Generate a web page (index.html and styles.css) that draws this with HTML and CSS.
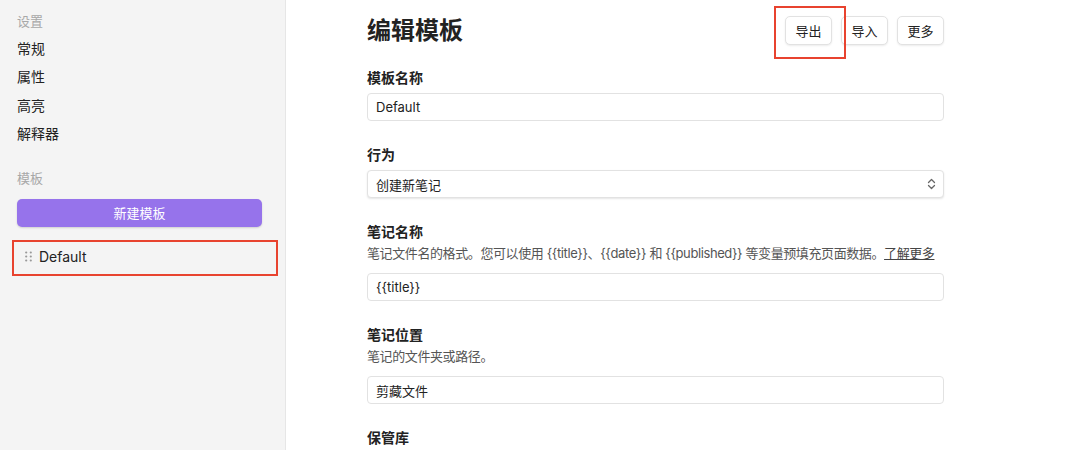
FILE: index.html
```html
<!DOCTYPE html>
<html lang="zh-CN">
<head>
    <meta charset="UTF-8">
    <meta name="viewport" content="width=device-width, initial-scale=1.0">
    <title>编辑模板</title>
    <link rel="stylesheet" href="styles.css">
</head>
<body>
    <div class="layout">
        <aside class="sidebar">
            <div class="side-title">设置</div>
            <div class="nav-item">常规</div>
            <div class="nav-item">属性</div>
            <div class="nav-item">高亮</div>
            <div class="nav-item">解释器</div>

            <div class="side-title templates-title">模板</div>
            <button class="new-btn" type="button">新建模板</button>
            <div class="template-item">
                <svg class="handle" width="7" height="11" viewBox="0 0 7 11">
                    <circle cx="1.2" cy="1.5" r="1.1"/><circle cx="5.8" cy="1.5" r="1.1"/>
                    <circle cx="1.2" cy="5.5" r="1.1"/><circle cx="5.8" cy="5.5" r="1.1"/>
                    <circle cx="1.2" cy="9.5" r="1.1"/><circle cx="5.8" cy="9.5" r="1.1"/>
                </svg>
                <span>Default</span>
                <div class="mark mark-item"></div>
            </div>
        </aside>

        <main class="main">
            <div class="header">
                <h1>编辑模板</h1>
                <div class="actions">
                    <div class="btn-wrap">
                        <button class="btn" type="button">导出</button>
                        <div class="mark mark-export"></div>
                    </div>
                    <button class="btn" type="button">导入</button>
                    <button class="btn" type="button">更多</button>
                </div>
            </div>

            <div class="field">
                <label class="label">模板名称</label>
                <input class="input" type="text" value="Default">
            </div>

            <div class="field">
                <label class="label">行为</label>
                <div class="input select">
                    <span>创建新笔记</span>
                    <svg width="9" height="12" viewBox="0 0 9 12" fill="none" stroke="#666" stroke-width="1.3" stroke-linecap="round" stroke-linejoin="round">
                        <path d="M1.5 4.5 L4.5 1.5 L7.5 4.5"/>
                        <path d="M1.5 7.5 L4.5 10.5 L7.5 7.5"/>
                    </svg>
                </div>
            </div>

            <div class="field">
                <label class="label">笔记名称</label>
                <div class="desc">笔记文件名的格式。您可以使用 {{title}}、{{date}} 和 {{published}} 等变量预填充页面数据。<a href="#">了解更多</a></div>
                <input class="input" type="text" value="{{title}}">
            </div>

            <div class="field">
                <label class="label">笔记位置</label>
                <div class="desc">笔记的文件夹或路径。</div>
                <input class="input" type="text" value="剪藏文件">
            </div>

            <div class="field">
                <label class="label">保管库</label>
            </div>
        </main>
    </div>
</body>
</html>
```

FILE: styles.css
```css
* {
    box-sizing: border-box;
}
body {
    margin: 0;
    font-family: Inter, "Noto Sans CJK SC", sans-serif;
    color: #222;
    background: #fff;
    height: 450px;
    overflow: hidden;
}
.layout {
    display: flex;
    height: 100%;
}

/* sidebar */
.sidebar {
    width: 286px;
    flex-shrink: 0;
    background: #f4f4f4;
    border-right: 1px solid #e6e6e6;
    padding: 12px 23px 0 17px;
}
.side-title {
    font-size: 13px;
    line-height: 18px;
    color: #a8a8a8;
    margin-bottom: 5px;
}
.templates-title {
    margin-top: 20px;
    margin-bottom: 12px;
}
.nav-item {
    font-size: 14px;
    line-height: 28.4px;
    color: #222;
}
.new-btn {
    display: block;
    width: 100%;
    height: 28px;
    border: none;
    border-radius: 5px;
    background: #9673eb;
    color: #fff;
    font-family: inherit;
    font-size: 13px;
    box-shadow: 0 1px 2px rgba(0, 0, 0, 0.15);
}
.template-item {
    position: relative;
    display: flex;
    align-items: center;
    gap: 7px;
    height: 28px;
    margin-top: 16px;
    padding-left: 8px;
    font-size: 14px;
}
.handle {
    fill: #999;
}

/* annotation boxes */
.mark {
    position: absolute;
    border: 2px solid #e8432f;
    pointer-events: none;
}
.mark-item {
    left: -5px;
    right: -16px;
    top: -3px;
    bottom: -5px;
}
.mark-export {
    left: -11px;
    right: -14px;
    top: -10px;
    bottom: -14px;
}

/* main */
.main {
    flex: 1;
    padding: 16px 0 0 81px;
}
.header {
    width: 577px;
    display: flex;
    align-items: center;
    justify-content: space-between;
    margin-bottom: 23px;
}
h1 {
    margin: 0;
    font-size: 24px;
    line-height: 29px;
    font-weight: 700;
}
.actions {
    display: flex;
    gap: 9px;
}
.btn-wrap {
    position: relative;
}
.btn {
    display: block;
    width: 47px;
    height: 29px;
    background: #fff;
    border: 1px solid #e2e2e2;
    border-radius: 5px;
    font-family: inherit;
    font-size: 13px;
    color: #222;
    box-shadow: 0 1px 2px rgba(0, 0, 0, 0.08);
}
.field {
    width: 577px;
    margin-bottom: 24px;
}
.label {
    display: block;
    font-size: 14px;
    line-height: 20px;
    font-weight: 600;
    margin-bottom: 5px;
}
.desc {
    font-size: 13px;
    line-height: 18px;
    color: #555;
    white-space: nowrap;
    letter-spacing: -0.4px;
    margin-top: -3px;
    margin-bottom: 11px;
}
.desc a {
    color: #444;
    text-decoration: underline;
}
.input {
    display: block;
    width: 100%;
    height: 28px;
    padding: 0 8px;
    border: 1px solid #e2e2e2;
    border-radius: 4px;
    background: #fff;
    font-family: inherit;
    font-size: 13px;
    color: #222;
    outline: none;
}
.select {
    display: flex;
    align-items: center;
    justify-content: space-between;
    box-shadow: 0 1px 2px rgba(0, 0, 0, 0.1);
    padding-right: 7px;
}
```
